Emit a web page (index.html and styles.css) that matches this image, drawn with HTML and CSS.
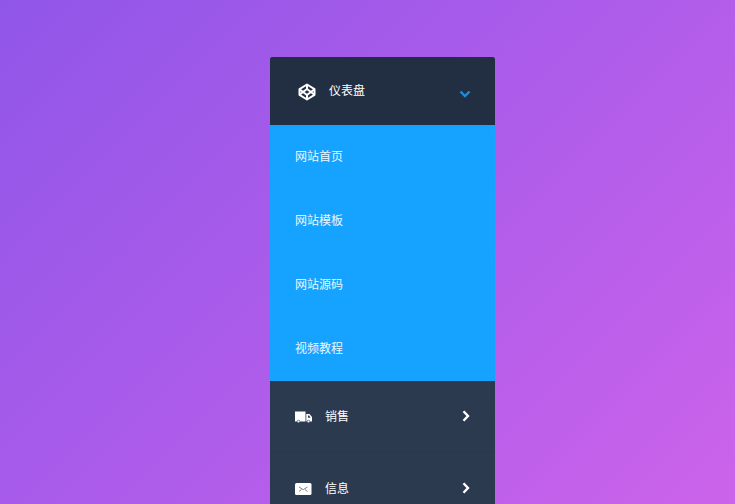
FILE: index.html
```html
<!DOCTYPE html>
<html lang="zh">
<head>
<meta charset="utf-8">
<title>菜单</title>
<link rel="stylesheet" href="styles.css">
</head>
<body>
<nav class="menu">
  <div class="head">
    <svg class="ico-pen" viewBox="0 0 18 18" width="18" height="18" fill="none" stroke="#fff" stroke-width="2" stroke-linejoin="round"><path d="M9 1.500 16.500 6.200v5.600L9 16.500 1.500 11.800V6.200Z"/><path d="M9 1.500V6M9 12v4.500M1.500 6.200 9 12l7.500-5.800M1.500 11.800 9 6l7.500 5.800"/></svg>
    <span class="head-label">仪表盘</span>
    <svg class="chev-down" viewBox="0 0 12 8" width="12" height="8" fill="none" stroke="#1a8fdc" stroke-width="2.400"><path d="M1.500 1.500 6 6l4.500-4.500"/></svg>
  </div>
  <ul class="sub">
    <li>网站首页</li>
    <li>网站模板</li>
    <li>网站源码</li>
    <li>视频教程</li>
  </ul>
  <div class="row">
    <svg class="ico" viewBox="0 0 17 12" width="17" height="12" fill="#fff"><path d="M0 .5h10.500v10H0zM11.300 3H14.500L17 6v4.500H11.300z"/><circle cx="3.500" cy="10.500" r="1.300" stroke="#2c3a50" stroke-width=".6"/><circle cx="13.500" cy="10.500" r="1.300" stroke="#2c3a50" stroke-width=".6"/><path d="M13 4.500h1.200L15.500 6.700H13z" fill="#2c3a50"/></svg>
    <span class="row-label">销售</span>
    <svg class="chev-right" viewBox="0 0 8 12" width="8" height="12" fill="none" stroke="#fff" stroke-width="2.400"><path d="M1.500 1.200 6 6l-4.500 4.800"/></svg>
  </div>
  <div class="row">
    <svg class="ico" viewBox="0 0 17 12" width="17" height="12"><rect width="16.500" height="12" rx="1.500" fill="#fff"/><path d="M4 4 8.250 6.700 12.500 4M4 8.500l2.500-2M12.500 8.500 10 6.500" fill="none" stroke="#7a8494" stroke-width="1"/></svg>
    <span class="row-label">信息</span>
    <svg class="chev-right" viewBox="0 0 8 12" width="8" height="12" fill="none" stroke="#fff" stroke-width="2.400"><path d="M1.500 1.200 6 6l-4.500 4.800"/></svg>
  </div>
</nav>
</body>
</html>
```
FILE: styles.css
```css
html, body {
  margin: 0;
}
body {
  height: 504px;
  overflow: hidden;
  padding: 57px 0 0 270px;
  box-sizing: border-box;
  background: linear-gradient(135deg, #9056e8 0%, #ad5cea 50%, #cc63ea 100%);
  font-family: "Noto Sans CJK SC", "Liberation Sans", sans-serif;
  color: #fff;
}
.menu {
  width: 225px;
  background: #2c3a50;
  border-radius: 3px 3px 0 0;
}
.head {
  height: 68px;
  display: flex;
  align-items: center;
  padding: 0 24px 0 28px;
  background: #222e41;
  border-radius: 3px 3px 0 0;
  font-size: 12px;
}
.ico-pen {
  flex: none;
  position: relative;
  top: 1px;
}
.head-label {
  margin-left: 13px;
  flex: 1;
  position: relative;
  top: -1.500px;
}
.chev-down {
  position: relative;
  top: 3px;
}
.sub {
  list-style: none;
  margin: 0;
  padding: 0;
  background: #15a3ff;
  font-size: 12px;
  color: #eaf6ff;
}
.sub li {
  height: 64px;
  line-height: 61px;
  padding-left: 25px;
}
.row {
  height: 72px;
  display: flex;
  align-items: center;
  padding: 0 25px 2px;
  font-size: 12px;
  box-sizing: border-box;
  border-bottom: 1px solid #2a384d;
}
.ico {
  flex: none;
  position: relative;
  top: 1px;
}
.row-label {
  flex: 1;
  margin-left: 13px;
}
```
